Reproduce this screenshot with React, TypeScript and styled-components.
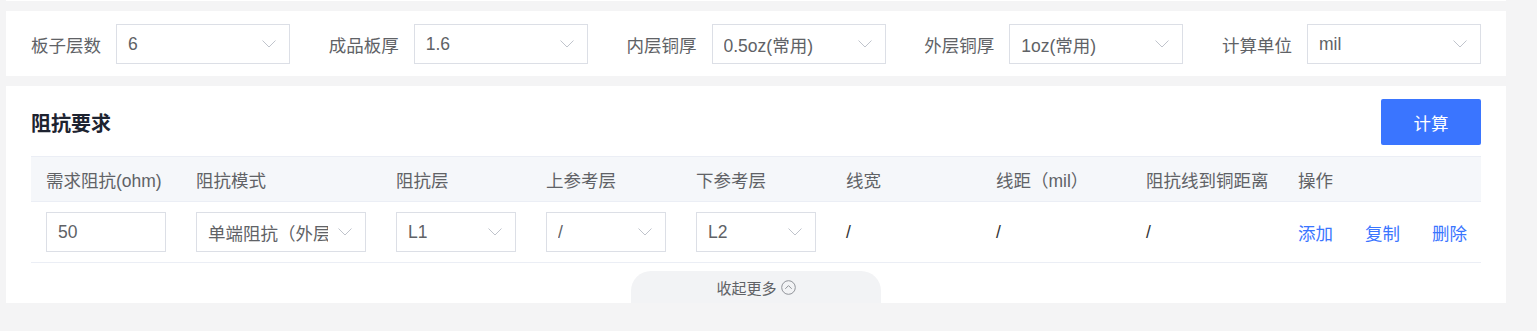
import React from "react";
import styled, { createGlobalStyle } from "styled-components";

const GlobalStyle = createGlobalStyle`
  body {
    margin: 0;
    background: #f4f4f5;
    font-family: "Liberation Sans", "Noto Sans CJK SC", sans-serif;
    font-size: 17.5px;
    color: #606266;
  }
`;

const Page = styled.div`
  padding-left: 6px;
  width: 1500px;
  display: flex;
  flex-direction: column;
  gap: 10px;
`;

const Sliver = styled.div`
  height: 1px;
  background: #fff;
`;

const Card = styled.div`
  background: #fff;
  padding: 0 25px;
`;

const FilterBar = styled(Card)`
  padding-top: 13px;
  padding-bottom: 12px;
  display: flex;
  justify-content: space-between;
`;

const Field = styled.div`
  display: flex;
  align-items: center;
  gap: 15px;
`;

const Label = styled.span`
  width: 70px;
  white-space: nowrap;
  color: #606266;
`;

const SelectBox = styled.div<{ $width: number }>`
  box-sizing: border-box;
  width: ${(p) => p.$width}px;
  height: 40px;
  border: 1px solid #dcdfe6;
  padding: 0 13px 0 11px;
  display: flex;
  align-items: center;
  gap: 10px;
  background: #fff;
`;

const SelectValue = styled.span`
  flex: 1;
  overflow: hidden;
  white-space: nowrap;
  color: #606266;
`;

const InputBox = styled(SelectBox)`
  color: #606266;
`;

const Chevron = () => (
  <svg width="14" height="8" viewBox="0 0 14 8" fill="none">
    <path d="M0.5 0.5 L7 7 L13.5 0.5" stroke="#c0c4cc" strokeWidth="1" />
  </svg>
);

function Select({ value, width }: { value: string; width: number }) {
  return (
    <SelectBox $width={width}>
      <SelectValue>{value}</SelectValue>
      <Chevron />
    </SelectBox>
  );
}

const ImpedanceCard = styled(Card)`
  padding-top: 13px;
  display: flex;
  flex-direction: column;
`;

const TitleRow = styled.div`
  display: flex;
  justify-content: space-between;
  align-items: center;
  height: 46px;
  margin-bottom: 11px;
`;

const Title = styled.h3`
  margin: 0;
  font-size: 20px;
  font-weight: bold;
  color: #1d2330;
`;

const CalcButton = styled.button`
  width: 100px;
  height: 46px;
  border: none;
  border-radius: 2px;
  background: #3a75ff;
  color: #fff;
  font-family: inherit;
  font-size: 17.5px;
  cursor: pointer;
`;

const columns = "150px 200px 150px 150px 150px 150px 150px 152px 1fr";

const HeadRow = styled.div`
  display: grid;
  grid-template-columns: ${columns};
  height: 46px;
  box-sizing: border-box;
  background: #f5f7fa;
  border-top: 1px solid #ebeef5;
  border-bottom: 1px solid #ebeef5;
`;

const BodyRow = styled.div`
  display: grid;
  grid-template-columns: ${columns};
  height: 61px;
  box-sizing: border-box;
  border-bottom: 1px solid #ebeef5;
`;

const Cell = styled.div`
  display: flex;
  align-items: center;
  padding-left: 15px;
  white-space: nowrap;
  color: #303133;
`;

const HeadCell = styled(Cell)`
  color: #606266;
`;

const Action = styled.a`
  color: #3a75ff;
  margin-right: 32px;
  cursor: pointer;
`;

const CollapseTab = styled.div`
  align-self: center;
  margin-top: 8px;
  width: 250px;
  height: 32px;
  border-radius: 20px 20px 0 0;
  background: #f2f3f5;
  display: flex;
  align-items: center;
  justify-content: center;
  gap: 4px;
  font-size: 15px;
  color: #606266;
`;

const CircleUp = () => (
  <svg width="15" height="15" viewBox="0 0 15 15" fill="none">
    <circle cx="7.5" cy="7.5" r="6.8" stroke="#909399" strokeWidth="1" />
    <path d="M4.3 8.8 L7.5 5.6 L10.7 8.8" stroke="#909399" strokeWidth="1" />
  </svg>
);

const filters = [
  { label: "板子层数", value: "6" },
  { label: "成品板厚", value: "1.6" },
  { label: "内层铜厚", value: "0.5oz(常用)" },
  { label: "外层铜厚", value: "1oz(常用)" },
  { label: "计算单位", value: "mil" },
];

const headers = [
  "需求阻抗(ohm)",
  "阻抗模式",
  "阻抗层",
  "上参考层",
  "下参考层",
  "线宽",
  "线距（mil）",
  "阻抗线到铜距离",
  "操作",
];

export default function App() {
  return (
    <>
      <GlobalStyle />
      <Page>
        <Sliver />
        <FilterBar>
          {filters.map((f) => (
            <Field key={f.label}>
              <Label>{f.label}</Label>
              <Select value={f.value} width={174} />
            </Field>
          ))}
        </FilterBar>
        <ImpedanceCard>
          <TitleRow>
            <Title>阻抗要求</Title>
            <CalcButton>计算</CalcButton>
          </TitleRow>
          <HeadRow>
            {headers.map((h) => (
              <HeadCell key={h}>{h}</HeadCell>
            ))}
          </HeadRow>
          <BodyRow>
            <Cell>
              <InputBox $width={120}>50</InputBox>
            </Cell>
            <Cell>
              <Select value="单端阻抗（外层）" width={170} />
            </Cell>
            <Cell>
              <Select value="L1" width={120} />
            </Cell>
            <Cell>
              <Select value="/" width={120} />
            </Cell>
            <Cell>
              <Select value="L2" width={120} />
            </Cell>
            <Cell>/</Cell>
            <Cell>/</Cell>
            <Cell>/</Cell>
            <Cell>
              <Action>添加</Action>
              <Action>复制</Action>
              <Action>删除</Action>
            </Cell>
          </BodyRow>
          <CollapseTab>
            收起更多
            <CircleUp />
          </CollapseTab>
        </ImpedanceCard>
      </Page>
    </>
  );
}
